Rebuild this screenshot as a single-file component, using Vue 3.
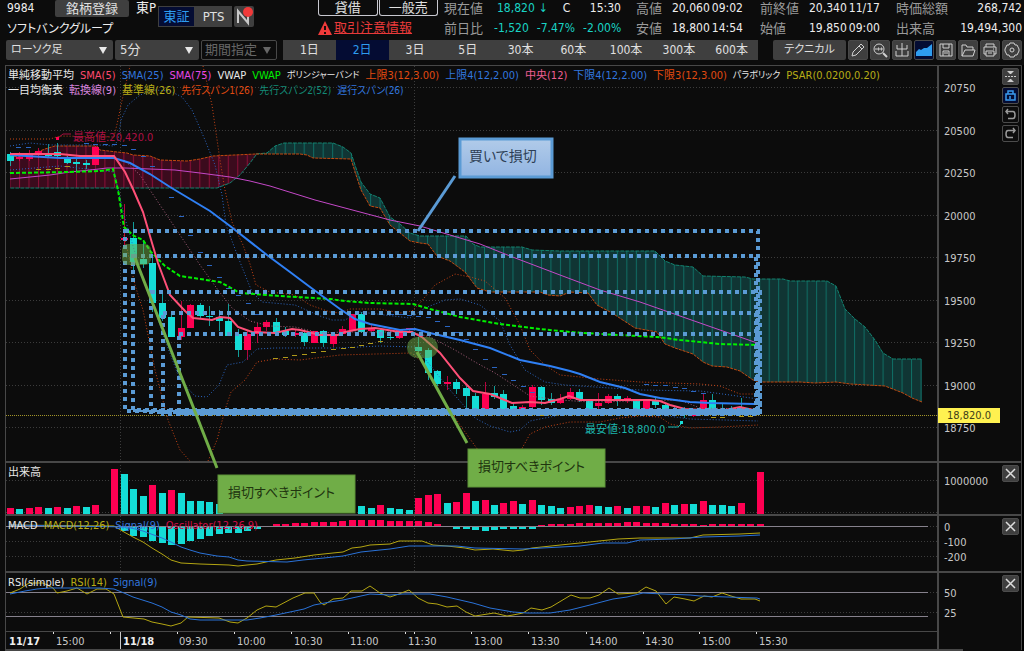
<script setup>
import { ref } from "vue";

const periods = ["1日", "2日", "3日", "5日", "30本", "60本", "100本", "300本", "600本"];
const period = ref("2日");

const tools = ["pencil", "search", "compare", "area", "save", "folder", "print", "gear"];
const toolLabels = ["描画", "拡大", "比較", "エリア", "保存", "開く", "印刷", "設定"];

const priceLegend = [
    [
        ["単純移動平均", "white"],
        ["SMA(5)", "rose"],
        ["SMA(25)", "blue"],
        ["SMA(75)", "magenta"],
        ["VWAP", "white"],
        ["VWAP", "green"],
        ["ボリンジャーバンド", "white kana"],
        ["上限3(12,3.00)", "orange"],
        ["上限4(12,2.00)", "blue"],
        ["中央(12)", "pink"],
        ["下限4(12,2.00)", "blue"],
        ["下限3(12,3.00)", "orange"],
        ["パラボリック", "white kana"],
        ["PSAR(0.0200,0.20)", "yellow"],
    ],
    [
        ["一目均衡表", "white"],
        ["転換線(9)", "violet"],
        ["基準線(26)", "yellow"],
        ["先行スパン1(26)", "orange mixed"],
        ["先行スパン2(52)", "teal mixed"],
        ["遅行スパン(26)", "blue mixed"],
    ],
];
const macdLegend = [
    ["MACD", "white"],
    ["MACD(12,26)", "yellow"],
    ["Signal(9)", "blue"],
    ["Oscillator(12,26,9)", "crimson"],
];
const rsiLegend = [
    ["RSI(simple)", "white"],
    ["RSI(14)", "yellow"],
    ["Signal(9)", "blue"],
];

// center of bar i
const cx = (i) => Math.round(10 + 9.49 * i);

const priceTicks = [20750, 20500, 20250, 20000, 19750, 19500, 19250, 19000, 18750].map(
    (value, i) => ({ value, y: Math.round(88 + i * 42.5) }),
);
const otherTicks = [
    [1000000, 481],
    [0, 527],
    [-100, 542],
    [-200, 557],
    [50, 593],
    [25, 613],
];
const gridRows = [481, 513, 542, 557, 613];

const times = [
    [56, "15:00"],
    [179, "09:30"],
    [237, "10:00"],
    [294, "10:30"],
    [350, "11:00"],
    [408, "11:30"],
    [474, "13:00"],
    [531, "13:30"],
    [589, "14:00"],
    [645, "14:30"],
    [702, "15:00"],
    [759, "15:30"],
];
const timeTicks = [53, 110, 177, 234, 291, 348, 405, 414, 471, 528, 586, 643, 699, 756];

// [bar, top, bottom, high, low, up]
const candles = [
    [0, 154, 161, 152, 166, 0],
    [1, 157, 159, 152, 161, 1],
    [2, 154, 159, 150, 161, 1],
    [3, 151, 155, 148, 158, 1],
    [4, 154, 156, 144, 158, 0],
    [5, 152, 156, 143, 158, 0],
    [6, 159, 163, 156, 164, 0],
    [7, 162, 164, 158, 172, 0],
    [8, 163, 165, 160, 169, 0],
    [9, 147, 165, 146, 165, 1],
    [12, 238, 240, 204, 245, 1],
    [13, 238, 262, 222, 270, 0],
    [14, 259, 264, 240, 268, 0],
    [15, 263, 303, 258, 312, 0],
    [16, 303, 318, 290, 321, 0],
    [17, 317, 337, 312, 337, 0],
    [18, 328, 337, 301, 340, 1],
    [19, 305, 328, 304, 328, 1],
    [20, 305, 316, 303, 318, 0],
    [21, 316, 317, 306, 326, 0],
    [22, 317, 321, 310, 331, 0],
    [23, 321, 336, 304, 336, 0],
    [24, 334, 350, 329, 357, 0],
    [25, 334, 350, 330, 360, 1],
    [26, 327, 334, 323, 343, 1],
    [27, 322, 327, 320, 331, 1],
    [28, 322, 332, 318, 333, 0],
    [29, 331, 335, 327, 337, 0],
    [30, 333, 335, 330, 337, 1],
    [31, 333, 342, 330, 346, 0],
    [32, 331, 343, 331, 343, 1],
    [33, 331, 343, 330, 347, 0],
    [34, 334, 344, 332, 347, 1],
    [35, 329, 334, 326, 335, 1],
    [36, 314, 330, 314, 330, 1],
    [37, 314, 332, 312, 333, 0],
    [38, 328, 331, 324, 332, 1],
    [39, 330, 338, 328, 343, 0],
    [40, 337, 338, 330, 340, 0],
    [41, 329, 338, 329, 339, 1],
    [42, 328, 330, 328, 331, 1],
    [43, 347, 351, 337, 355, 0],
    [44, 350, 373, 348, 380, 0],
    [45, 371, 384, 370, 386, 0],
    [46, 382, 384, 376, 390, 1],
    [47, 382, 389, 379, 394, 0],
    [48, 388, 396, 386, 410, 0],
    [49, 396, 410, 393, 411, 0],
    [50, 394, 409, 382, 410, 1],
    [51, 393, 397, 386, 399, 0],
    [52, 394, 409, 390, 410, 0],
    [53, 406, 410, 403, 411, 0],
    [54, 407, 410, 405, 411, 1],
    [55, 387, 407, 385, 408, 1],
    [56, 387, 400, 386, 405, 0],
    [57, 399, 403, 393, 405, 0],
    [58, 399, 403, 394, 404, 1],
    [59, 392, 399, 388, 400, 1],
    [60, 392, 400, 389, 402, 0],
    [61, 401, 410, 399, 411, 0],
    [62, 403, 406, 393, 409, 1],
    [63, 396, 403, 394, 404, 1],
    [64, 396, 401, 394, 406, 0],
    [65, 398, 400, 396, 403, 1],
    [66, 400, 409, 399, 410, 0],
    [67, 401, 410, 400, 411, 1],
    [68, 400, 405, 397, 408, 0],
    [69, 405, 410, 403, 411, 0],
    [70, 409, 411, 406, 413, 0],
    [71, 411, 413, 407, 418, 0],
    [72, 413, 416, 410, 417, 1],
    [73, 400, 410, 393, 415, 1],
    [74, 400, 409, 394, 414, 0],
    [75, 409, 411, 404, 414, 0],
    [76, 409, 411, 406, 413, 0],
    [77, 408, 410, 398, 412, 0],
];

// [bar, top, up]
const volume = [
    [0, 508, 1], [1, 509, 0], [2, 508, 1], [3, 507, 1], [4, 508, 0], [5, 507, 1], [6, 508, 0],
    [7, 506, 1], [8, 507, 0], [9, 505, 1], [11, 469, 1], [12, 474, 0], [13, 489, 0], [14, 496, 0],
    [15, 485, 1], [16, 493, 0], [17, 490, 1], [18, 493, 0], [19, 501, 0], [20, 501, 0], [21, 502, 0],
    [22, 504, 0], [37, 506, 0], [38, 508, 0], [39, 505, 1], [40, 508, 0], [41, 509, 0], [42, 510, 0],
    [43, 498, 1], [44, 495, 1], [45, 494, 1], [46, 503, 0], [47, 502, 1], [48, 493, 1], [49, 501, 0],
    [50, 500, 1], [51, 505, 0], [52, 503, 1], [53, 501, 1], [54, 504, 0], [55, 500, 1], [56, 505, 0],
    [57, 506, 0], [58, 508, 0], [59, 507, 1], [60, 506, 1], [61, 505, 1], [62, 506, 0], [63, 507, 0],
    [64, 506, 1], [65, 508, 0], [66, 506, 1], [67, 506, 1], [68, 507, 0], [69, 503, 1], [70, 505, 0],
    [71, 504, 1], [72, 504, 0], [73, 501, 1], [74, 505, 0], [75, 505, 0], [76, 506, 0], [77, 503, 1],
    [79, 472, 1],
];

// oscillator height per bar, starting at bar 12
const oscillator = [
    -4, -9, -10, -14, -16, -18, -17, -14, -12, -9, -7, -6, -6, -4, -2, 0, 2, 2, 3, 3, 4, 4, 4, 5, 6, 6,
    6, 6, 5, 5, 5, 5, 4, 2, 0, -2, -2, -3, -4, -3, -2, -2, -2, -2, 1, 2, 2, 2, 3, 3, 3, 3, 3, 4, 4, 3,
    3, 3, 2, 2, 2, 1, 2, 2, 2, 2, 2, 2,
].map((h, n) => ({ x: cx(n + 12) - 3, y: h > 0 ? 526 - h : 527, h: Math.abs(h), up: h > 0 }));

const redTop = "10,157 30,155 45,149 55,146 97,146 100,150 117,152 127,153 133,155 150,156 160,160 187,161 200,159 213,156 256,154";
const redBottom = "256,155 250,163 240,175 230,183 217,188 10,188";
const tealTop =
    "256,154 267,153 275,146 284,143 333,143 343,147 351,153 356,168 361,182 370,194 380,198 390,217 400,224 410,233 420,236 466,236 473,244 480,247 510,247 522,247 532,250 560,251 655,251 665,261 675,265 693,267 703,276 745,277 753,279 783,279 790,281 827,281 836,286 845,309 855,319 865,327 875,340 883,353 893,359 922,359";
const tealBottom =
    "922,402 912,398 903,393 885,386 850,384 836,382 815,383 800,382 760,382 753,380 740,371 727,367 712,366 703,362 693,354 675,348 665,344 657,332 635,328 612,313 597,305 588,293 570,292 560,296 548,295 540,292 490,292 477,288 465,272 450,261 437,256 428,244 420,243 410,241 400,233 390,225 380,208 370,206 361,190 356,175 351,159 313,158 307,155 300,154 256,154";

const lines = [
    ["band orange", "10,139 50,139 60,136 114,137 118,120 121,105 130,66"],
    ["band orange", "203,66 212,105 220,160 225,190 232,222 243,245 250,264 256,285 270,292 295,295 310,305 330,312 340,313 350,309 380,309 400,313 412,311 420,303 435,285 455,274 470,277 485,281 505,298 520,325 530,350 545,365 560,375 600,379 640,382 700,384 720,386 740,394 758,394"],
    ["band orange", "124,235 135,285 143,310 155,370 168,420 180,450 190,461"],
    ["band orange", "208,461 217,440 225,410 231,392 245,380 257,362 275,359 300,360 340,355 412,353 425,365 440,395 460,425 478,450 490,461"],
    ["band orange", "514,461 520,452 530,434 545,427 570,422 600,422 620,418 640,416 660,417 670,424 690,428 720,427 758,425"],
    ["band blue", "10,146 30,143 50,145 100,145 114,146 118,140 121,120 128,105 140,95 155,90 170,91 182,97 192,110 205,140 215,165 222,195 226,225 240,262 252,292 262,302 295,305 320,316 332,320 345,320 360,312 410,318 425,308 445,300 460,299 480,305 500,321 510,345 525,370 545,382 565,385 640,390 700,391 730,395 758,399"],
    ["band blue", "10,170 60,166 114,172 124,215 140,270 155,310 165,340 180,380 195,396 207,397 219,385 227,365 243,362 257,349 275,348 338,348 380,346 415,347 430,365 450,390 475,418 490,426 510,432 520,430 530,421 560,415 600,414 660,415 690,419 758,421"],
    ["band pink", "124,160 140,175 160,205 180,235 200,265 218,290 232,308 250,321 270,326 295,327 320,333 345,332 412,332 430,337 455,350 475,362 495,373 515,386 530,396 560,400 590,402 680,400 700,408 758,409"],
    ["sma75", "10,179 30,177 50,175 70,172 90,170 107,168 125,168 150,169 175,170 200,173 230,177 250,181 270,186 315,200 360,212 390,220 420,226 450,235 480,244 510,256 560,275 600,290 640,302 680,316 720,330 760,344"],
    ["vwap", "10,173 70,172 100,171 113,169 118,190 124,227 134,236 143,240 151,252 165,266 180,276 220,282 240,293 280,296 330,299 345,301 370,303 413,304 430,309 460,317 500,324 540,329 570,332 600,334 657,337 680,340 720,344 757,345"],
    ["sma25", "10,155 60,158 114,158 130,163 150,174 170,187 190,199 210,211 230,226 267,255 290,272 310,287 340,309 355,319 370,324 385,327 400,330 415,329 430,333 460,340 490,348 520,360 550,366 570,371 580,374 600,382 625,388 640,394 660,398 690,402 710,403 755,404"],
    ["sma5", "10,154 60,154 80,156 114,156 125,172 133,189 143,212 152,243 158,263 170,295 185,311 193,318 212,320 220,317 230,318 238,327 252,332 275,333 292,329 300,330 320,335 338,335 345,332 360,329 375,328 400,332 412,332 422,337 440,353 460,378 473,391 490,394 512,403 530,402 545,403 560,399 569,396 580,400 650,400 660,401 670,405 685,409 720,411 740,407 758,411"],
];

const blueDashes = [
    [18, 148], [28, 148], [86, 144], [95, 145], [105, 145], [114, 145], [124, 146], [133, 150],
    [143, 157], [152, 167], [171, 198], [181, 217], [190, 236], [200, 253], [209, 266], [219, 278],
    [228, 289], [238, 296], [248, 304], [257, 315], [391, 315], [400, 315], [409, 316], [418, 317],
    [428, 318], [437, 322], [447, 327], [457, 333], [466, 340], [475, 350], [485, 360], [494, 368],
    [504, 375], [513, 381], [523, 387], [532, 393], [646, 385], [655, 386], [665, 386], [675, 388],
    [684, 389], [693, 392], [703, 394],
];
const yellowDashes = [
    [38, 170], [48, 170], [57, 169], [67, 167], [275, 359], [285, 358], [294, 356], [304, 355],
    [313, 353], [323, 352], [333, 350], [343, 349], [352, 348], [361, 346], [370, 344], [380, 342],
    [541, 416], [713, 418], [722, 418], [741, 417], [750, 417],
];

// [x, y, right, bottom] of the stop-loss boxes
const boxes = [
    [125, 231, 758, 411],
    [133, 256, 756, 410],
    [151, 292, 760, 412],
    [163, 313, 757, 414],
    [179, 334, 760, 412],
];

const macdLine =
    "10,525 114,526 124,532 133,537 143,542 152,548 162,554 171,560 181,563 200,564 229,565 238,566 247,565 257,564 266,562 276,560 295,558 314,555 333,553 343,552 352,548 361,547 370,545 390,544 399,541 422,541 433,545 447,546 465,548 475,550 493,549 513,551 523,550 532,548 551,546 570,544 599,541 618,539 640,538 690,538 703,535 740,534 760,533";
const macdSignal =
    "10,525 127,527 143,531 162,538 171,542 181,547 190,550 200,553 217,556 229,557 238,560 247,561 287,562 303,560 324,558 343,556 361,552 380,550 390,549 409,546 457,546 475,548 523,549 580,546 603,543 627,543 640,540 673,539 703,537 740,536 760,535";
const rsiLine =
    "10,593 20,589 29,583 43,583 53,588 57,593 67,591 77,588 87,594 97,589 106,589 114,594 123,617 144,619 152,622 162,624 171,626 181,623 188,617 219,618 230,622 238,623 247,618 257,610 266,606 276,607 293,598 305,593 314,593 320,602 324,605 333,599 343,598 351,591 362,591 370,586 380,593 390,597 399,594 409,590 418,598 428,603 437,604 447,607 457,606 466,612 475,616 494,613 507,616 513,615 523,613 531,608 542,610 551,607 561,601 571,595 580,598 590,598 599,595 609,588 618,594 637,593 646,587 656,591 666,604 674,597 685,599 694,601 704,596 712,597 722,593 731,596 741,599 755,599 760,601";
const rsiSignal =
    "10,594 25,591 37,589 50,588 100,588 114,589 124,593 133,597 152,603 162,607 171,612 181,615 190,619 200,620 247,620 260,618 276,615 290,612 304,609 314,605 330,602 343,600 370,594 390,595 403,594 430,594 447,597 473,603 490,608 513,612 527,613 550,613 570,610 590,605 613,599 627,597 643,593 663,594 690,595 700,596 727,597 757,598 760,599";
</script>

<template>
    <main class="app">
        <header class="quote">
            <div class="symbol">
                <div class="symbol-row">
                    <span class="code">9984</span>
                    <button class="register">銘柄登録</button>
                    <span class="market">東P</span>
                </div>
                <h1>ソフトバンクグループ</h1>
            </div>
            <div class="exchange">
                <button class="active">東証</button>
                <button>PTS</button>
            </div>
            <button class="news" aria-label="ニュース">
                <svg width="20" height="21" viewBox="0 0 20 21">
                    <path d="M4 17V5l10 12V5" fill="none" stroke="#c8c8c8" stroke-width="2" />
                    <circle cx="14" cy="6" r="5" fill="#f03a3a" />
                </svg>
            </button>
            <div class="notice">
                <div class="tags">
                    <button>貸借</button>
                    <button>一般売</button>
                </div>
                <a href="#">
                    <svg width="14" height="14" viewBox="0 0 14 14">
                        <path d="M7 0L14 14H0Z" fill="#f03a3a" />
                        <path d="M6 5h2v4H6zM6 11h2v2H6z" fill="#1a0c0c" />
                    </svg>
                    <span>取引注意情報</span>
                </a>
            </div>
            <dl class="now">
                <dt>現在値</dt>
                <dd><b>18,820</b><b class="arrow">↓</b><span>C</span><span>15:30</span></dd>
                <dt>前日比</dt>
                <dd><b>-1,520</b><b>-7.47%</b><b>-2.00%</b></dd>
            </dl>
            <dl class="range">
                <dt>高値</dt>
                <dd><span>20,060</span><span>09:02</span></dd>
                <dt>安値</dt>
                <dd><span>18,800</span><span>14:54</span></dd>
            </dl>
            <dl class="open">
                <dt>前終値</dt>
                <dd><span>20,340</span><span>11/17</span></dd>
                <dt>始値</dt>
                <dd><span>19,850</span><span>09:00</span></dd>
            </dl>
            <dl class="total">
                <dt>時価総額</dt>
                <dd><span>268,742</span></dd>
                <dt>出来高</dt>
                <dd><span>19,494,300</span></dd>
            </dl>
        </header>

        <nav class="toolbar">
            <label class="picker type">
                <select aria-label="チャート種類"><option>ローソク足</option></select>
                <i></i>
            </label>
            <label class="picker foot">
                <select aria-label="足種"><option>5分</option></select>
                <i></i>
            </label>
            <label class="picker span">
                <select aria-label="期間" disabled><option>期間指定</option></select>
                <i></i>
            </label>
            <div class="periods">
                <button
                    v-for="p in periods"
                    :key="p"
                    :class="{ active: p === period }"
                    @click="period = p"
                >
                    {{ p }}
                </button>
            </div>
            <button class="technical">テクニカル</button>
            <div class="tools">
                <button
                    v-for="(t, i) in tools"
                    :key="t"
                    :class="{ active: t === 'area' }"
                    :aria-label="toolLabels[i]"
                >
                    <svg width="16" height="16" viewBox="0 0 16 16">
                        <g v-if="t === 'pencil'">
                            <path d="M2 14l1-4 8-8 3 3-8 8zM9 4l3 3" />
                        </g>
                        <g v-else-if="t === 'search'">
                            <circle cx="7" cy="7" r="5" />
                            <path d="M11 11l4 4" stroke-width="2" />
                            <path d="M4 6v2M6 6h1v2H6zM9 6h1v2H9z" />
                        </g>
                        <g v-else-if="t === 'compare'">
                            <path d="M8 1v13M3 3v4h10V3M2 9v5h12V9" />
                        </g>
                        <path v-else-if="t === 'area'" class="area" d="M0 14V10l3-3 2 1 3-2 3 0 5-4v12z" />
                        <g v-else-if="t === 'save'">
                            <path d="M2 2h12v12H2zM5 2v4h6V2M5 14V9h6v5M6 11h4" />
                        </g>
                        <g v-else-if="t === 'folder'">
                            <path d="M2 14V3h4l1 2h6v3M2 14l3-6h10l-2 6z" />
                        </g>
                        <g v-else-if="t === 'print'">
                            <path d="M4 5V2h8v3M4 12H2V5h12v7h-2M4 9h8v5H4zM6 11h4M11 7h1" />
                        </g>
                        <g v-else>
                            <path d="M6 1h4l1 2h2l2 4v2l-2 4h-2l-1 2H6l-1-2H3L1 9V7l2-4h2z" />
                            <circle cx="8" cy="8" r="2" />
                        </g>
                    </svg>
                </button>
            </div>
        </nav>

        <section class="chart">
            <svg class="plot" viewBox="5 65 1019 586">
                <defs>
                    <pattern id="redStripe" width="9.49" height="10" x="9.5" patternUnits="userSpaceOnUse">
                        <rect width="10" height="10" fill="#3b0b1d" />
                        <rect width="1" height="10" fill="#8b0f38" />
                    </pattern>
                    <pattern id="tealStripe" width="9.49" height="10" x="9.5" patternUnits="userSpaceOnUse">
                        <rect width="10" height="10" fill="#103534" />
                        <rect width="1" height="10" fill="#0f6e65" />
                    </pattern>
                    <linearGradient id="blueFill" x1="0" y1="0" x2="0" y2="1">
                        <stop offset="0" stop-color="#b1cbe9" />
                        <stop offset="1" stop-color="#92b5e2" />
                    </linearGradient>
                </defs>

                <rect x="5" y="65" width="1017" height="586" fill="#0c0c0c" />
                <g class="grid">
                    <path v-for="t in priceTicks" :key="t.value" :d="`M6 ${t.y - 0.5}H938`" />
                    <path v-for="y in gridRows" :key="y" :d="`M6 ${y - 0.5}H938`" />
                    <path d="M120.5 66V572M414.5 66V572M927 526.5H938M927 592.5H938" />
                </g>
                <path class="last" d="M6 415.5H938" />

                <polygon :points="`${redTop} ${redBottom}`" fill="url(#redStripe)" />
                <polygon :points="`${tealTop} ${tealBottom}`" fill="url(#tealStripe)" />
                <polyline class="span1" :points="redTop" />
                <polyline class="span2" :points="redBottom" />
                <polyline class="span2" :points="tealTop" />
                <polyline class="span1" :points="tealBottom" />

                <g v-for="c in candles" :key="c[0]" :class="c[5] ? 'up' : 'down'">
                    <rect class="wick" :x="cx(c[0])" :y="c[3]" width="1" :height="c[4] - c[3]" />
                    <rect :x="cx(c[0]) - 3" :y="c[1]" width="7" :height="c[2] - c[1]" />
                </g>
                <polyline v-for="(l, i) in lines" :key="i" :class="l[0]" :points="l[1]" />
                <path
                    v-for="(d, i) in blueDashes"
                    :key="`b${i}`"
                    class="dash-blue"
                    :d="`M${d[0] - 2} ${d[1] - 0.5}h5`"
                />
                <path
                    v-for="(d, i) in yellowDashes"
                    :key="`y${i}`"
                    class="dash-yellow"
                    :d="`M${d[0] - 2} ${d[1] - 0.5}h5`"
                />

                <path d="M71 134h-8l-5 4" fill="none" stroke="#a80f40" />
                <rect x="56" y="137" width="3" height="3" fill="#ff0052" />
                <text class="mark high" x="73" y="141">最高値:20,420.0</text>
                <path d="M668 427h10l4 -4" fill="none" stroke="#19b8b0" />
                <rect x="680" y="421" width="3" height="3" fill="#1addd8" />
                <text class="mark low" x="585" y="433">最安値:18,800.0</text>

                <!-- volume -->
                <rect
                    v-for="v in volume"
                    :key="v[0]"
                    :class="v[2] ? 'up' : 'down'"
                    :x="cx(v[0]) - 3"
                    :y="v[1]"
                    width="7"
                    :height="514 - v[1]"
                />

                <!-- macd -->
                <rect
                    v-for="(o, i) in oscillator"
                    :key="i"
                    :class="o.up ? 'up' : 'down'"
                    :x="o.x"
                    :y="o.y"
                    width="7"
                    :height="o.h"
                />
                <path class="level" d="M6 526.5H928M6 592.5H928M6 616.5H928" />
                <polyline class="main-line" :points="macdLine" />
                <polyline class="signal-line" :points="macdSignal" />
                <polyline class="main-line" :points="rsiLine" />
                <polyline class="signal-line" :points="rsiSignal" />

                <!-- frame -->
                <path class="frame" d="M5.5 65.5H1021.5V650M5.5 65V650" />
                <path class="frame thick" d="M938 65V650M5 462H1022M5 515H1022M5 572H1022M5 650H963" />
                <path class="frame" d="M5 631.5H938" />
                <path d="M120.5 632V649" stroke="#c8c8c8" />
                <path v-for="x in timeTicks" :key="x" :d="`M${x}.5 632v2`" stroke="#e0e0e0" />
                <text class="date" x="9" y="645">11/17</text>
                <text class="date" x="123" y="645">11/18</text>
                <text v-for="t in times" :key="t[0]" class="axis" :x="t[0]" y="645">{{ t[1] }}</text>
                <text v-for="t in priceTicks" :key="t.value" class="axis" x="944" :y="t.y + 4">
                    {{ t.value }}
                </text>
                <text v-for="t in otherTicks" :key="t[0]" class="axis" x="944" :y="t[1] + 4">
                    {{ t[0] }}
                </text>
                <rect x="938" y="408" width="62" height="15" fill="#fff150" />
                <text class="tag" x="947" y="419">18,820.0</text>

                <!-- stop-loss boxes -->
                <rect
                    v-for="b in boxes"
                    :key="b[0]"
                    class="stop"
                    :x="b[0]"
                    :y="b[1]"
                    :width="b[2] - b[0]"
                    :height="b[3] - b[1]"
                />
                <path d="M179 412H760" stroke="#5b9bd5" stroke-width="6" />
                <path d="M133 411H179" stroke="#5b9bd5" stroke-width="2" />

                <rect x="122" y="244" width="29" height="21" rx="6" class="spot" />
                <rect x="407" y="337" width="31" height="21" rx="10" class="spot" />
                <path d="M135 258L217 468M417 352L467 443" stroke="#70ad47" stroke-width="3" />
                <path d="M455 176L418 231" stroke="#5b9bd5" stroke-width="3" />
                <rect x="460" y="139" width="92" height="38" fill="url(#blueFill)" stroke="#5b9bd5" stroke-width="3" />
                <text class="callout navy" x="469" y="161">買いで損切</text>
                <rect x="218" y="475" width="137" height="38" class="green-box" />
                <text class="callout olive" x="228" y="497">損切すべきポイント</text>
                <rect x="468" y="449" width="137" height="38" class="green-box" />
                <text class="callout olive" x="478" y="471">損切すべきポイント</text>
            </svg>

            <div class="panes">
                <div class="pane">
                    <div>
                        <p v-for="(row, r) in priceLegend" :key="r" class="legend">
                            <span v-for="(item, i) in row" :key="i" :class="item[1]">{{ item[0] }}</span>
                        </p>
                    </div>
                    <div class="side">
                        <button aria-label="縮小">
                            <svg width="15" height="15" viewBox="0 0 15 15">
                                <path d="M4 2h7L8 5H7zM4 13h7l-3-3H7z" fill="#ccc" />
                                <path d="M2 7.500h11" stroke="#ccc" stroke-dasharray="2 1" />
                            </svg>
                        </button>
                        <button class="active" aria-label="固定">
                            <svg width="15" height="15" viewBox="0 0 15 15" fill="none" stroke="#3a9bf0">
                                <path d="M3 6h9v6H3zM5 6V3h5v3M7 8v3" stroke-width="1.500" />
                            </svg>
                        </button>
                        <button class="plain" aria-label="元に戻す">
                            <svg width="15" height="15" viewBox="0 0 15 15" fill="none" stroke="#9a9a9a">
                                <path d="M5 2L3 4.500l2 2.500M3 4.500h7q2 0 2 3.500t-2 3.500H5" stroke-width="1.500" />
                            </svg>
                        </button>
                        <button class="plain" aria-label="やり直す">
                            <svg width="15" height="15" viewBox="0 0 15 15" fill="none" stroke="#9a9a9a">
                                <path d="M10 2l2 2.500-2 2.500M12 4.500H5q-2 0-2 3.500t2 3.500h5" stroke-width="1.500" />
                            </svg>
                        </button>
                    </div>
                </div>
                <div
                    v-for="(legend, n) in [[['出来高', 'white']], macdLegend, rsiLegend]"
                    :key="n"
                    class="pane"
                >
                    <p class="legend">
                        <span v-for="(item, i) in legend" :key="i" :class="item[1]">{{ item[0] }}</span>
                    </p>
                    <div class="side">
                        <button aria-label="閉じる">
                            <svg width="15" height="15" viewBox="0 0 15 15">
                                <path d="M3 3l9 9M12 3l-9 9" stroke="#ddd" stroke-width="1.500" />
                            </svg>
                        </button>
                    </div>
                </div>
            </div>
        </section>
    </main>
</template>

<style>
body {
    margin: 0;
    background: #ffffff;
}
</style>

<style scoped>
.app {
    background: #0c0c0c;
    color: #eeeeee;
    font: 12px/16px "DejaVu Sans Condensed", "Noto Sans CJK JP", sans-serif;
    font-feature-settings: "palt";
    white-space: nowrap;
}

button,
select {
    font: inherit;
    font-feature-settings: inherit;
    color: #e0e0e0;
    background: #3f3f3f;
    border: 0;
    border-radius: 2px;
    padding: 0;
    margin: 0;
}

button.active {
    background: #040c33;
    color: #2e9df0;
}

/* quote header */
.quote {
    display: flex;
    height: 40px;
    padding: 0 2px 0 7px;
    overflow: hidden;
}

.symbol {
    width: 151px;
}

.symbol-row {
    display: flex;
    height: 17px;
}

.code {
    width: 48px;
}

.register {
    width: 74px;
    margin-right: 7px;
    font-size: 13px;
    line-height: 15px;
}

.market {
    font-size: 13px;
}

h1 {
    margin: 3px 0 0;
    font-size: 12px;
    font-weight: normal;
    line-height: 18px;
}

.exchange {
    display: flex;
    width: 74px;
    height: 21px;
    margin: 6px 2px 0 0;
}

.exchange button {
    flex: 1;
    border: 1px solid #3f3f3f;
    border-radius: 0;
    font-size: 13px;
}

.news {
    width: 20px;
    height: 21px;
    margin: 6px 64px 0 0;
}

.news svg {
    display: block;
}

.notice {
    width: 126px;
}

.tags {
    display: flex;
    gap: 1px;
    height: 16px;
    width: 120px;
}

.tags button {
    flex: 1;
    background: transparent;
    border: 1px solid #c8c8d0;
    border-top: 0;
    border-radius: 0 0 3px 3px;
    font-size: 13px;
    line-height: 14px;
}

.notice a {
    display: flex;
    gap: 2px;
    align-items: center;
    margin-top: 3px;
    color: #e83a3a;
    font-size: 13px;
    line-height: 18px;
}

dl {
    display: grid;
    grid-template-rows: 16px 18px;
    row-gap: 4px;
    margin: 0;
}

dt {
    color: #9a9a9a;
    font-size: 13px;
}

dd {
    display: flex;
    margin: 0;
    gap: 2px;
}

dd b {
    color: #19d3c5;
    font-weight: normal;
}

dl > * {
    line-height: 17px;
}

.now {
    width: 192px;
    grid-template-columns: 50px 1fr;
}

.now dd {
    gap: 8px;
}

.now dd:first-of-type {
    gap: 0;
    padding-left: 3px;
}

.now .arrow {
    width: 24px;
    padding-left: 4px;
}

.now dd span:first-of-type {
    width: 27px;
}

.range {
    width: 124px;
    grid-template-columns: 36px 1fr;
}

.open {
    width: 136px;
    grid-template-columns: 49px 1fr;
}

.total {
    flex: 1;
    grid-template-columns: 52px 1fr;
}

.total dd {
    justify-content: flex-end;
}

/* toolbar */
.toolbar {
    display: flex;
    gap: 2px;
    height: 20px;
    padding: 0 2px 5px 6px;
}

.picker {
    position: relative;
    display: flex;
}

.picker select {
    width: 100%;
    appearance: none;
    padding-left: 5px;
    font-size: 13px;
}

.picker i {
    position: absolute;
    right: 6px;
    top: 7px;
    border: 4px solid transparent;
    border-top: 7px solid #e8e8e8;
    border-bottom: 0;
}

.type {
    width: 107px;
}

.type select,
.technical {
    font-size: 11px;
}

.foot {
    width: 84px;
}

.span {
    width: 76px;
}

.span select {
    background: #0c0c0c;
    border: 1px solid #484848;
    padding-left: 3px;
    color: #666666;
    opacity: 1;
}

.span i {
    border-top-color: #666666;
}

.periods {
    display: flex;
    flex: 1;
    margin: 0 13px 0 4px;
}

.periods button {
    flex: 1;
    border-radius: 0;
}

.technical {
    width: 73px;
}

.tools {
    display: flex;
    gap: 2px;
}

.tools button {
    width: 20px;
    padding: 1px;
    border: 1px solid #484848;
}

.tools svg {
    display: block;
    fill: none;
    stroke: #d0d0d0;
}

.tools .area {
    fill: #2e9df0;
    stroke: none;
}

/* chart */
.chart {
    position: relative;
    margin-left: 5px;
    background: #000000;
}

.plot {
    display: block;
    width: 100%;
}

.plot polyline {
    fill: none;
}

.grid {
    stroke: #3c3c3c;
    stroke-dasharray: 1 2;
}

.last {
    stroke: #a3942a;
    stroke-dasharray: 1 1;
}

.up {
    fill: #ff0052;
}

.down {
    fill: #14dcd6;
}

.wick {
    opacity: 0.7;
}

.span1 {
    stroke: #c2490f;
    stroke-dasharray: 3 1;
}

.span2 {
    stroke: #12826f;
    stroke-dasharray: 4 1;
}

.band {
    stroke-dasharray: 1 2;
}

.band.orange {
    stroke: #c84415;
}

.band.blue {
    stroke: #2b66c2;
}

.band.pink {
    stroke: #a8607c;
}

.sma75 {
    stroke: #c548c8;
}

.vwap {
    stroke: #00f000;
    stroke-width: 2;
    stroke-dasharray: 4 2;
}

.sma25 {
    stroke: #2f80f5;
    stroke-width: 2;
}

.sma5 {
    stroke: #ff5078;
    stroke-width: 2;
}

.dash-blue {
    stroke: #2b66c2;
}

.dash-yellow {
    stroke: #b09a1a;
}

.level {
    stroke: #86818c;
}

.main-line {
    stroke: #b3a512;
}

.signal-line {
    stroke: #2a72d8;
}

.frame {
    fill: none;
    stroke: #484848;
}

.thick {
    stroke-width: 2;
}

.axis {
    fill: #c8c8c8;
    font-size: 11px;
}

.date {
    fill: #f0f0f0;
    font-size: 11px;
    font-weight: bold;
}

.tag {
    fill: #40401a;
    font-size: 11px;
}

.mark {
    font-size: 11px;
}

.high {
    fill: #b01045;
}

.low {
    fill: #1cb5ab;
}

.stop {
    fill: none;
    stroke: #5b9bd5;
    stroke-width: 4;
    stroke-dasharray: 4 4;
}

.spot {
    fill: #70ad47;
    opacity: 0.5;
}

.green-box {
    fill: #70ad47;
    stroke: #5c9238;
}

.callout {
    font-size: 14px;
}

.navy {
    fill: #2d3e55;
}

.olive {
    fill: #20350f;
    font-size: 13px;
}

.panes {
    position: absolute;
    inset: 0;
    display: grid;
    grid-template-rows: 397fr 53fr 57fr 60fr 19fr;
}

.pane {
    display: flex;
    justify-content: space-between;
    min-height: 0;
    padding: 3px 5px 0 3px;
}

.legend {
    display: flex;
    gap: 6px;
    margin: 0;
    font-size: 11px;
    line-height: 15px;
}

.legend .kana {
    font-size: 9px;
}

.legend .mixed {
    font-size: 10px;
}

.white {
    color: #e8e8e8;
}

.rose {
    color: #ff4a6e;
}

.legend .blue {
    color: #3276de;
}

.magenta {
    color: #e648e6;
}

.green {
    color: #00f000;
}

.legend .orange {
    color: #e04a10;
}

.legend .pink {
    color: #ee5f92;
}

.yellow {
    color: #b8ac16;
}

.violet {
    color: #d684dc;
}

.teal {
    color: #138a76;
}

.crimson {
    color: #d00c48;
}

.side {
    display: flex;
    flex-direction: column;
    gap: 2px;
}

.side button {
    width: 17px;
    height: 17px;
    border: 1px solid #4c4c4c;
}

.side svg {
    display: block;
}

.side .plain {
    background: #0c0c0c;
}
</style>
